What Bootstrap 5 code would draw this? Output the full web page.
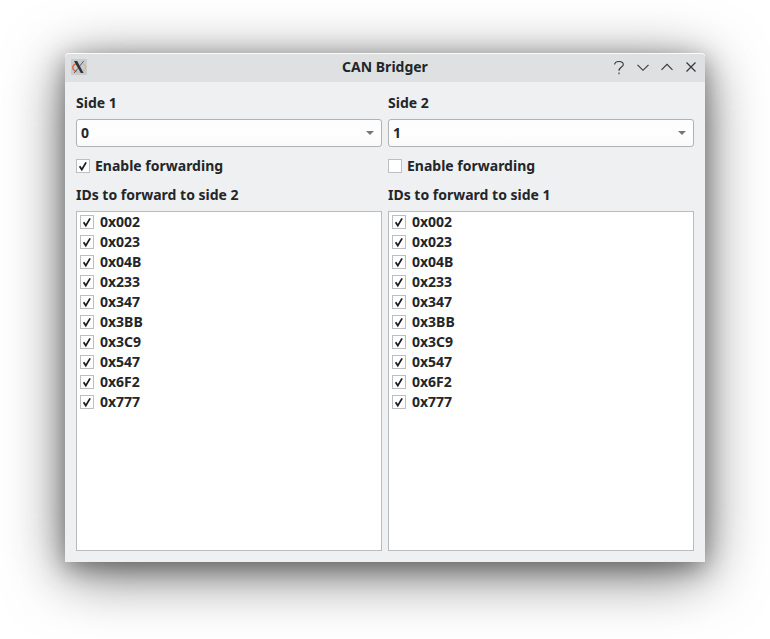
<!DOCTYPE html>
<html lang="en">
<head>
<meta charset="utf-8">
<meta name="viewport" content="width=device-width, initial-scale=1">
<title>CAN Bridger</title>
<link href="https://cdn.jsdelivr.net/npm/bootstrap@5.3.0/dist/css/bootstrap.min.css" rel="stylesheet">
<style>
  html { overflow: hidden; }
  body { background: #fff; color: #232629; font: 700 14px/20px "Noto Sans", sans-serif; padding: 53px 65px 0; min-height: 639px; }
  .app-window { width: 640px; height: 509px; background: #eff0f1; border-radius: 4px 4px 0 0;
    box-shadow: 0 12px 60px rgba(0,0,0,.57), 0 6px 24px rgba(0,0,0,.35); }
  .title-bar { height: 29px; background: #dee0e2; border-radius: 4px 4px 0 0; box-shadow: inset 0 1px #fbfbfb; padding: 0 6px; }
  .title-side { width: 92px; }
  .title-text, .title-icon { padding-bottom: 2px; }
  .window-body { padding: 11px; gap: 6px; height: 480px; }
  .side-panel { width: 306px; }
  .combo { height: 28px; border: 1px solid #b0b2b3; border-radius: 3px; background: linear-gradient(#fdfdfd, #fefefe 50%, #fafafa); margin-top: 6px; padding: 0 7px 0 4px; }
  .enable-row { height: 20px; margin-top: 9px; gap: 5px; }
  .ids-label { margin-top: 9px; }
  .id-list { margin-top: 6px; border: 1px solid #b9bbbc; background: #fff; height: 340px; padding-left: 3px; }
  .id-list .list-group-item { height: 20px; padding: 0; gap: 6px; background: none; color: inherit; border: 0; }
  .tick-box { width: 14px; height: 14px; border: 1px solid #bcbebf; background: #fff; flex: none; }
  .tick-box svg { display: block; }
</style>
<script src="https://cdn.jsdelivr.net/npm/bootstrap@5.3.0/dist/js/bootstrap.bundle.min.js"></script>
</head>
<body>
<svg class="d-none">
  <symbol id="tick" viewBox="0 0 12 12"><path d="M2.6 6.2 4.8 9.6 9.1 2.4" fill="none" stroke="#1b1e20" stroke-width="1.8"/></symbol>
  <symbol id="arrow" viewBox="0 0 8 4"><path d="M0 0h8L4 4z" fill="#75777a"/></symbol>
</svg>
<main class="app-window">
  <header class="title-bar d-flex align-items-center justify-content-between">
    <div class="title-side title-icon d-flex">
      <svg width="16" height="16" viewBox="0 0 16 16">
        <rect width="16" height="16" rx=".5" fill="#c5cdd1"/>
        <path d="M5.5 4.8C2.8 5.4 1.4 7.4 1.8 9.2c.4 1.8 1.8 2.9 3.8 3.4" fill="none" stroke="#e8643a" stroke-width="1.4"/>
        <path d="M5.6 12.8c5 1 8.8-.8 9-4.2 0-2-1-3.2-2.6-3.8" fill="none" stroke="#e5b184" stroke-width="1.1"/>
        <path d="M3 2h3.2L12.6 14H9.8z" fill="#303437"/>
        <path d="M12.7 2 8.8 7M7 9.3 3.2 14" fill="none" stroke="#5b5e60" stroke-width="1"/>
      </svg>
    </div>
    <div class="title-text">CAN Bridger</div>
    <div class="title-side d-flex justify-content-end gap-2">
      <svg width="16" height="16" viewBox="0 0 16 16" fill="none" stroke="#33373a" stroke-width="1.1"><path d="M3.7 4.5c0-2 1.6-3 4.3-3s4.3 1 4.3 3.1C12.3 7 8 7.2 8 10.8M8 12.6v1.6"/></svg>
      <svg width="16" height="16" viewBox="0 0 16 16" fill="none" stroke="#33373a" stroke-width="1.1"><path d="m2.5 4.8 5.5 5.5 5.5-5.5"/></svg>
      <svg width="16" height="16" viewBox="0 0 16 16" fill="none" stroke="#33373a" stroke-width="1.1"><path d="M2.5 9.8 8 4.3l5.5 5.5"/></svg>
      <svg width="16" height="16" viewBox="0 0 16 16" fill="none" stroke="#33373a" stroke-width="1.2"><path d="m3.5 2.5 9 9m0-9-9 9"/></svg>
    </div>
  </header>
  <div class="window-body d-flex">
    <section class="side-panel">
      <div>Side 1</div>
      <div class="combo d-flex align-items-center justify-content-between"><span>0</span><svg width="8" height="4"><use href="#arrow"/></svg></div>
      <div class="enable-row d-flex align-items-center"><span class="tick-box"><svg width="12" height="12"><use href="#tick"/></svg></span><span>Enable forwarding</span></div>
      <div class="ids-label">IDs to forward to side 2</div>
      <ul class="id-list list-group list-group-flush rounded-0 mb-0">
        <li class="list-group-item d-flex align-items-center"><span class="tick-box"><svg width="12" height="12"><use href="#tick"/></svg></span>0x002</li>
        <li class="list-group-item d-flex align-items-center"><span class="tick-box"><svg width="12" height="12"><use href="#tick"/></svg></span>0x023</li>
        <li class="list-group-item d-flex align-items-center"><span class="tick-box"><svg width="12" height="12"><use href="#tick"/></svg></span>0x04B</li>
        <li class="list-group-item d-flex align-items-center"><span class="tick-box"><svg width="12" height="12"><use href="#tick"/></svg></span>0x233</li>
        <li class="list-group-item d-flex align-items-center"><span class="tick-box"><svg width="12" height="12"><use href="#tick"/></svg></span>0x347</li>
        <li class="list-group-item d-flex align-items-center"><span class="tick-box"><svg width="12" height="12"><use href="#tick"/></svg></span>0x3BB</li>
        <li class="list-group-item d-flex align-items-center"><span class="tick-box"><svg width="12" height="12"><use href="#tick"/></svg></span>0x3C9</li>
        <li class="list-group-item d-flex align-items-center"><span class="tick-box"><svg width="12" height="12"><use href="#tick"/></svg></span>0x547</li>
        <li class="list-group-item d-flex align-items-center"><span class="tick-box"><svg width="12" height="12"><use href="#tick"/></svg></span>0x6F2</li>
        <li class="list-group-item d-flex align-items-center"><span class="tick-box"><svg width="12" height="12"><use href="#tick"/></svg></span>0x777</li>
      </ul>
    </section>
    <section class="side-panel">
      <div>Side 2</div>
      <div class="combo d-flex align-items-center justify-content-between"><span>1</span><svg width="8" height="4"><use href="#arrow"/></svg></div>
      <div class="enable-row d-flex align-items-center"><span class="tick-box"></span><span>Enable forwarding</span></div>
      <div class="ids-label">IDs to forward to side 1</div>
      <ul class="id-list list-group list-group-flush rounded-0 mb-0">
        <li class="list-group-item d-flex align-items-center"><span class="tick-box"><svg width="12" height="12"><use href="#tick"/></svg></span>0x002</li>
        <li class="list-group-item d-flex align-items-center"><span class="tick-box"><svg width="12" height="12"><use href="#tick"/></svg></span>0x023</li>
        <li class="list-group-item d-flex align-items-center"><span class="tick-box"><svg width="12" height="12"><use href="#tick"/></svg></span>0x04B</li>
        <li class="list-group-item d-flex align-items-center"><span class="tick-box"><svg width="12" height="12"><use href="#tick"/></svg></span>0x233</li>
        <li class="list-group-item d-flex align-items-center"><span class="tick-box"><svg width="12" height="12"><use href="#tick"/></svg></span>0x347</li>
        <li class="list-group-item d-flex align-items-center"><span class="tick-box"><svg width="12" height="12"><use href="#tick"/></svg></span>0x3BB</li>
        <li class="list-group-item d-flex align-items-center"><span class="tick-box"><svg width="12" height="12"><use href="#tick"/></svg></span>0x3C9</li>
        <li class="list-group-item d-flex align-items-center"><span class="tick-box"><svg width="12" height="12"><use href="#tick"/></svg></span>0x547</li>
        <li class="list-group-item d-flex align-items-center"><span class="tick-box"><svg width="12" height="12"><use href="#tick"/></svg></span>0x6F2</li>
        <li class="list-group-item d-flex align-items-center"><span class="tick-box"><svg width="12" height="12"><use href="#tick"/></svg></span>0x777</li>
      </ul>
    </section>
  </div>
</main>
</body>
</html>
